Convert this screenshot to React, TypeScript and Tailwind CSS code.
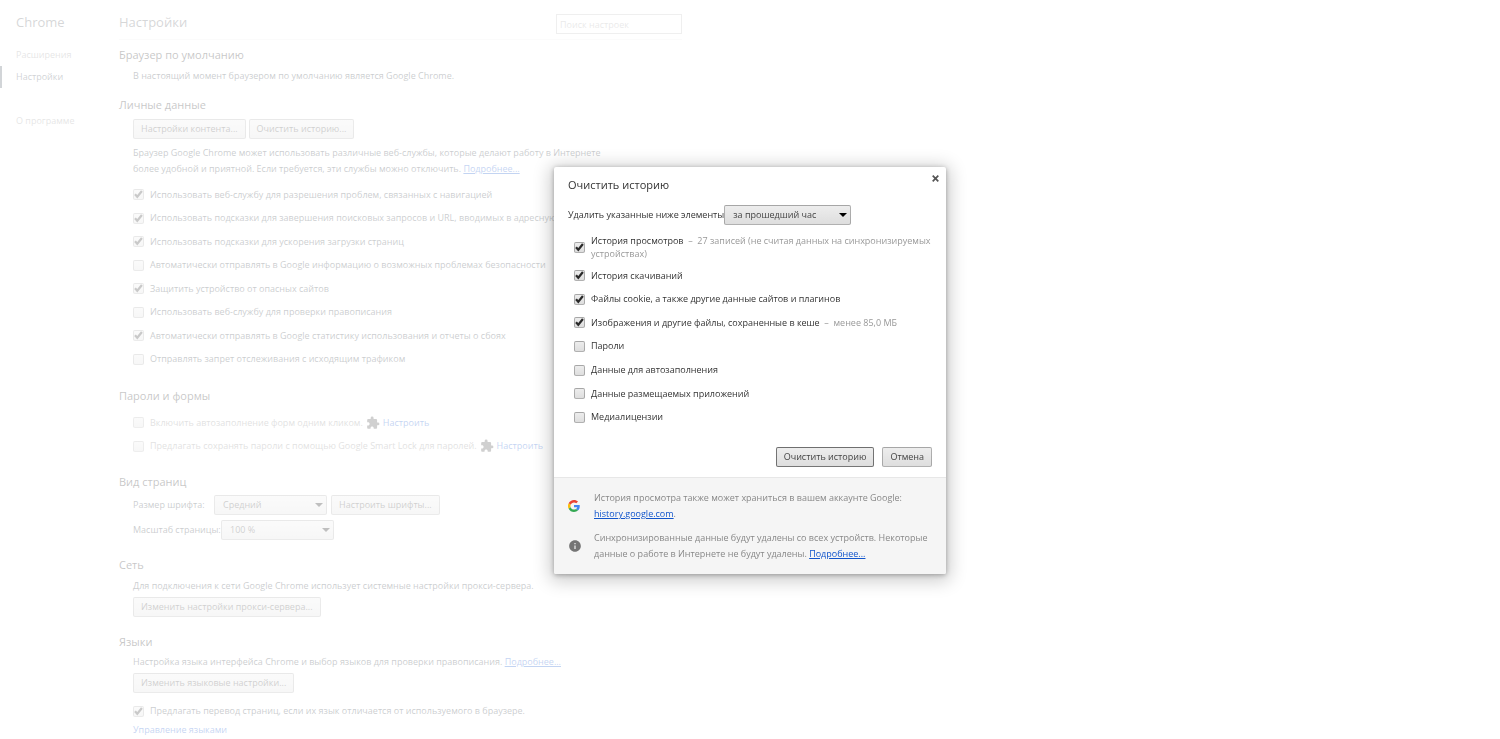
import type { ReactNode } from "react";
import { MdExtension, MdInfo } from "react-icons/md";

const navItems = [
  { label: "Расширения", active: false },
  { label: "Настройки", active: true },
];

const privacyOptions = [
  { label: "Использовать веб-службу для разрешения проблем, связанных с навигацией", checked: true },
  { label: "Использовать подсказки для завершения поисковых запросов и URL, вводимых в адресную строку", checked: true },
  { label: "Использовать подсказки для ускорения загрузки страниц", checked: true },
  { label: "Автоматически отправлять в Google информацию о возможных проблемах безопасности", checked: false },
  { label: "Защитить устройство от опасных сайтов", checked: true },
  { label: "Использовать веб-службу для проверки правописания", checked: false },
  { label: "Автоматически отправлять в Google статистику использования и отчеты о сбоях", checked: true },
  { label: "Отправлять запрет отслеживания с исходящим трафиком", checked: false },
];

const passwordOptions = [
  "Включить автозаполнение форм одним кликом.",
  "Предлагать сохранять пароли с помощью Google Smart Lock для паролей.",
];

const clearOptions = [
  { label: "История скачиваний", checked: true },
  { label: "Файлы cookie, а также другие данные сайтов и плагинов", checked: true },
  { label: "Изображения и другие файлы, сохраненные в кеше", note: "менее 85,0 МБ", checked: true },
  { label: "Пароли", checked: false },
  { label: "Данные для автозаполнения", checked: false },
  { label: "Данные размещаемых приложений", checked: false },
  { label: "Медиалицензии", checked: false },
];

type CheckboxProps = {
  children: ReactNode;
  checked?: boolean;
  disabled?: boolean;
};

const Checkbox = ({ children, checked = false, disabled = false }: CheckboxProps) => (
  <label className={`flex items-center gap-1.5 ${disabled ? "text-[#888]" : ""}`}>
    <span className="grid shrink-0">
      <input
        type="checkbox"
        defaultChecked={checked}
        disabled={disabled}
        className="peer col-start-1 row-start-1 size-[11px] appearance-none rounded-[2px] border border-black/25 bg-linear-to-b from-[#ededed] to-[#dedede] disabled:border-black/20"
      />
      <svg
        viewBox="0 0 11 11"
        className="pointer-events-none invisible col-start-1 row-start-1 size-[11px] overflow-visible peer-checked:visible"
      >
        <path d="M2 5.2 4.3 7.7 8.9 2" fill="none" stroke="#2a2a2a" strokeWidth="2.2" />
      </svg>
    </span>
    <span>{children}</span>
  </label>
);

const Button = ({ children, primary = false }: { children: ReactNode; primary?: boolean }) => (
  <button
    type="button"
    className={`h-5 rounded-[2px] border bg-linear-to-b from-[#ededed] to-[#dedede] px-[7px] text-[#444] ${
      primary ? "border-black/50" : "border-black/25"
    }`}
  >
    {children}
  </button>
);

const Select = ({ id, value, className }: { id: string; value: string; className: string }) => (
  <span className={`grid ${className}`}>
    <select
      id={id}
      className="col-start-1 row-start-1 h-5 w-full appearance-none rounded-[2px] border border-black/25 bg-linear-to-b from-[#ededed] to-[#dedede] pl-2 text-[#444]"
    >
      <option>{value}</option>
    </select>
    <svg
      viewBox="0 0 8 4"
      className="pointer-events-none col-start-1 row-start-1 mr-1 h-1 w-2 self-center justify-self-end"
    >
      <path d="M0 0h8L4 4z" fill="#000" />
    </svg>
  </span>
);

const Link = ({ children, underline = true }: { children: ReactNode; underline?: boolean }) => (
  <a href="#" className={`text-[#15c] ${underline ? "underline" : ""}`}>
    {children}
  </a>
);

type SectionProps = {
  title: string;
  className?: string;
  children: ReactNode;
};

const Section = ({ title, className = "mt-[15px]", children }: SectionProps) => (
  <section className={className}>
    <h2 className="text-[11px] leading-5 text-[#222]">{title}</h2>
    <div className="pl-3.5">{children}</div>
  </section>
);

const GoogleLogo = () => (
  <svg viewBox="0 0 48 48" className="size-3">
    <path fill="#EA4335" d="M24 9.5c3.54 0 6.71 1.22 9.21 3.6l6.85-6.85C35.9 2.38 30.47 0 24 0 14.62 0 6.51 5.38 2.56 13.22l7.98 6.19C12.43 13.72 17.74 9.5 24 9.5z" />
    <path fill="#4285F4" d="M46.98 24.55c0-1.57-.15-3.09-.38-4.55H24v9.02h12.94c-.58 2.96-2.26 5.48-4.78 7.18l7.73 6c4.51-4.18 7.09-10.36 7.09-17.65z" />
    <path fill="#FBBC05" d="M10.53 28.59c-.48-1.45-.76-2.99-.76-4.59s.27-3.14.76-4.59l-7.98-6.19C.92 16.46 0 20.12 0 24c0 3.88.92 7.54 2.56 10.78l7.97-6.19z" />
    <path fill="#34A853" d="M24 48c6.48 0 11.93-2.13 15.89-5.81l-7.73-6c-2.15 1.45-4.92 2.3-8.16 2.3-6.26 0-11.57-4.22-13.47-9.91l-7.98 6.19C6.51 42.62 14.62 48 24 48z" />
  </svg>
);

const Sidebar = () => (
  <nav className="w-[119px] shrink-0 pt-3.5">
    <h1 className="mb-3.5 pl-4 text-[13px] leading-4 text-[#5c6166]">Chrome</h1>
    {navItems.map((item) => (
      <a
        key={item.label}
        href="#"
        className={`block border-l-2 pl-3.5 leading-[22px] ${
          item.active ? "border-[#4e5764] text-[#464e5a]" : "border-transparent text-[#999]"
        }`}
      >
        {item.label}
      </a>
    ))}
    <a href="#" className="mt-[22px] block border-l-2 border-transparent pl-3.5 leading-[22px] text-[#999]">
      О программе
    </a>
  </nav>
);

const Settings = () => (
  <main className="w-full max-w-[563px]">
    <header className="flex items-start justify-between border-b border-[#eee] pt-3.5 pb-[5px]">
      <h1 className="text-[13px] leading-4 text-[#5c6166]">Настройки</h1>
      <input
        type="search"
        aria-label="Поиск настроек"
        placeholder="Поиск настроек"
        className="h-5 w-[126px] border border-[#bfbfbf] px-[3px] placeholder:text-[#a9a9a9]"
      />
    </header>

    <Section title="Браузер по умолчанию" className="mt-[5px]">
      <p className="mt-[3px]">В настоящий момент браузером по умолчанию является Google Chrome.</p>
    </Section>

    <Section title="Личные данные" className="mt-[11px]">
      <div className="mt-1 flex gap-[3px]">
        <Button>Настройки контента...</Button>
        <Button>Очистить историю...</Button>
      </div>
      <p className="mt-1.5 max-w-[480px]">
        Браузер Google Chrome может использовать различные веб-службы, которые делают работу в Интернете более удобной и
        приятной. Если требуется, эти службы можно отключить. <Link>Подробнее...</Link>
      </p>
      <div className="mt-1.5 grid min-h-[188px] auto-rows-fr whitespace-nowrap">
        {privacyOptions.map((option) => (
          <Checkbox key={option.label} checked={option.checked}>
            {option.label}
          </Checkbox>
        ))}
      </div>
    </Section>

    <Section title="Пароли и формы">
      <div className="mt-[5px] grid min-h-[47px] auto-rows-fr">
        {passwordOptions.map((label) => (
          <div key={label} className="flex items-center gap-[3px]">
            <Checkbox disabled>{label}</Checkbox>
            <MdExtension className="size-3.5 text-[#444]" />
            <Link underline={false}>Настроить</Link>
          </div>
        ))}
      </div>
    </Section>

    <Section title="Вид страниц" className="mt-3.5">
      <div className="mt-[3px] flex items-center">
        <label htmlFor="font-size" className="w-[81px]">Размер шрифта:</label>
        <Select id="font-size" value="Средний" className="mr-1 w-[113px]" />
        <Button>Настроить шрифты...</Button>
      </div>
      <div className="mt-[5px] flex items-center">
        <label htmlFor="page-zoom" className="w-[88px]">Масштаб страницы:</label>
        <Select id="page-zoom" value="100 %" className="w-[113px]" />
      </div>
    </Section>

    <Section title="Сеть">
      <p className="my-[3px]">Для подключения к сети Google Chrome использует системные настройки прокси-сервера.</p>
      <Button>Изменить настройки прокси-сервера...</Button>
    </Section>

    <Section title="Языки">
      <p className="mt-0.5 mb-[3px]">
        Настройка языка интерфейса Chrome и выбор языков для проверки правописания. <Link>Подробнее...</Link>
      </p>
      <Button>Изменить языковые настройки...</Button>
      <div className="mt-2.5 mb-[3px]">
        <Checkbox checked>Предлагать перевод страниц, если их язык отличается от используемого в браузере.</Checkbox>
      </div>
      <Link underline={false}>Управление языками</Link>
    </Section>
  </main>
);

const Note = ({ children }: { children: ReactNode }) => <span className="text-[#999]">&nbsp;–&nbsp; {children}</span>;

const ClearHistoryDialog = () => (
  <div
    role="dialog"
    aria-labelledby="dialog-title"
    className="w-[392px] rounded-[2px] bg-white text-[#333] shadow-[0_3px_18px_4px_rgba(0,0,0,0.2),0_1px_5px_rgba(0,0,0,0.3)]"
  >
    <div className="px-3.5 pb-2.5">
      <div className="flex items-start justify-between pt-2">
        <h2 id="dialog-title" className="text-[11px] leading-5">Очистить историю</h2>
        <button type="button" aria-label="Закрыть" className="-mr-[7px] p-0">
          <svg viewBox="0 0 7 7" className="size-[7px]">
            <path d="M.7.7l5.6 5.6M6.3.7.7 6.3" stroke="#555" strokeWidth="1.7" />
          </svg>
        </button>
      </div>

      <div className="mt-2.5 flex items-center">
        <label htmlFor="period">Удалить указанные ниже элементы</label>
        <Select id="period" value="за прошедший час" className="w-[127px]" />
      </div>

      <div className="mt-[9px] pl-1.5 leading-[13px]">
        <Checkbox checked>
          История просмотров <Note>27 записей (не считая данных на синхронизируемых устройствах)</Note>
        </Checkbox>
      </div>
      <div className="mt-1 grid min-h-[165px] auto-rows-fr pl-1.5">
        {clearOptions.map((option) => (
          <Checkbox key={option.label} checked={option.checked}>
            {option.label} {option.note && <Note>{option.note}</Note>}
          </Checkbox>
        ))}
      </div>

      <div className="mt-[18px] flex justify-end gap-2">
        <Button primary>Очистить историю</Button>
        <Button>Отмена</Button>
      </div>
    </div>

    <footer className="flex flex-col gap-2 rounded-b-[2px] border-t border-[#e7e7e7] bg-[#f5f5f5] px-3.5 py-3 text-[#888]">
      <div className="flex items-center gap-3.5">
        <GoogleLogo />
        <p>
          История просмотра также может храниться в вашем аккаунте Google:
          <br />
          <Link>history.google.com</Link>.
        </p>
      </div>
      <div className="flex items-center gap-3">
        <MdInfo className="size-3.5 shrink-0 text-[#757575]" />
        <p>
          Синхронизированные данные будут удалены со всех устройств. Некоторые данные о работе в Интернете не будут
          удалены. <Link>Подробнее...</Link>
        </p>
      </div>
    </footer>
  </div>
);

export default function App() {
  return (
    <div className="min-h-screen bg-white font-['Open_Sans','Noto_Sans',sans-serif] text-[9px] leading-4 text-[#303942]">
      <div className="flex">
        <Sidebar />
        <Settings />
      </div>
      <div className="fixed inset-0 flex items-center justify-center bg-white/75 pt-0.5">
        <ClearHistoryDialog />
      </div>
    </div>
  );
}
